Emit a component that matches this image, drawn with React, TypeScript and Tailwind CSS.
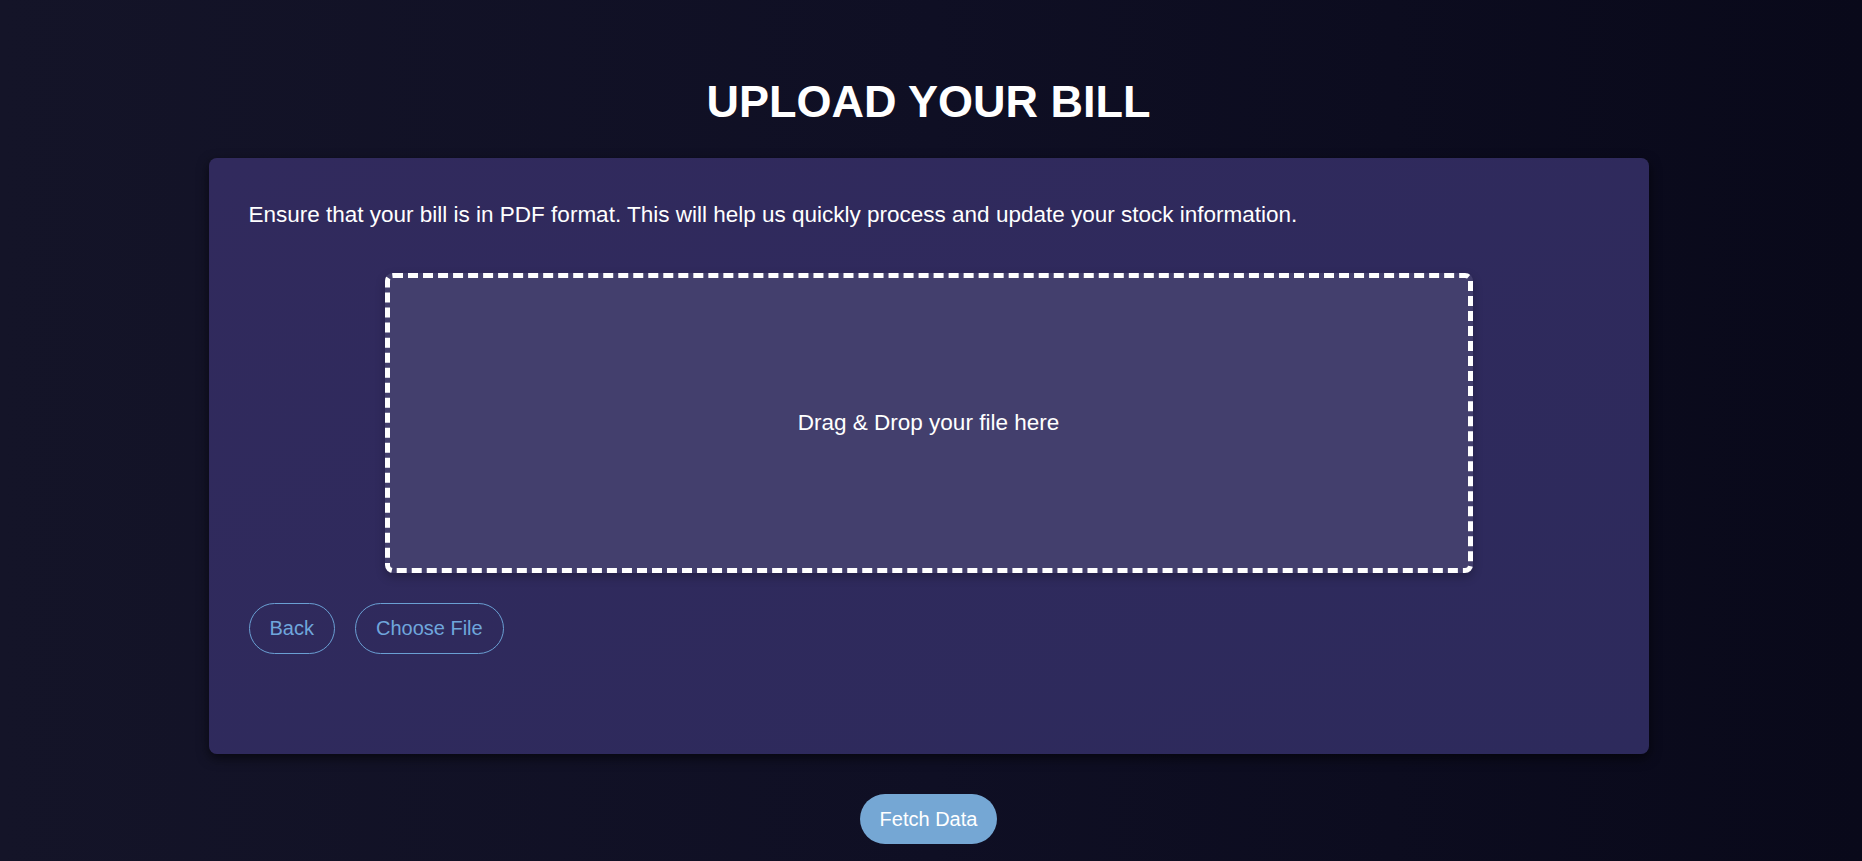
import React from 'react';

const App: React.FC = () => {
  return (
    <div className="min-h-screen w-full bg-gradient-to-r from-[#141428] via-[#0f0f24] to-[#09091a] flex flex-col items-center pt-[76px] pr-[5px] pb-4 font-['Liberation_Sans',Arial,sans-serif] text-white">
      <h1 className="text-[45px] font-bold leading-[1.15]">UPLOAD YOUR BILL</h1>

      <div className="mt-[30px] w-[1440px] rounded-lg bg-gradient-to-br from-[#312a5d] to-[#2d2a5c] p-10 pb-[100px] shadow-[0_4px_12px_rgba(0,0,0,0.6)]">
        <p className="mt-1 text-[22.5px] leading-[1.15]">
          Ensure that your bill is in PDF format. This will help us quickly process and update your stock information.
        </p>

        <div className="mx-auto mt-[45px] flex h-[300px] w-[1088px] items-center justify-center rounded-lg border-[5px] border-dashed border-white bg-[#433f6d] shadow-[0_4px_10px_rgba(0,0,0,0.25)]">
          <span className="text-[22.5px] leading-[1.15]">Drag &amp; Drop your file here</span>
        </div>

        <div className="mt-[30px] flex gap-5">
          <button className="h-[51px] rounded-full border border-[#6a9fd3] px-5 text-[20px] text-[#6fa6dc]">
            Back
          </button>
          <button className="h-[51px] rounded-full border border-[#6a9fd3] px-5 text-[20px] text-[#6fa6dc]">
            Choose File
          </button>
        </div>
      </div>

      <button className="mt-10 h-[50px] rounded-full bg-[#75a7d4] px-5 text-[20px] text-white">
        Fetch Data
      </button>
    </div>
  );
};

export default App;
